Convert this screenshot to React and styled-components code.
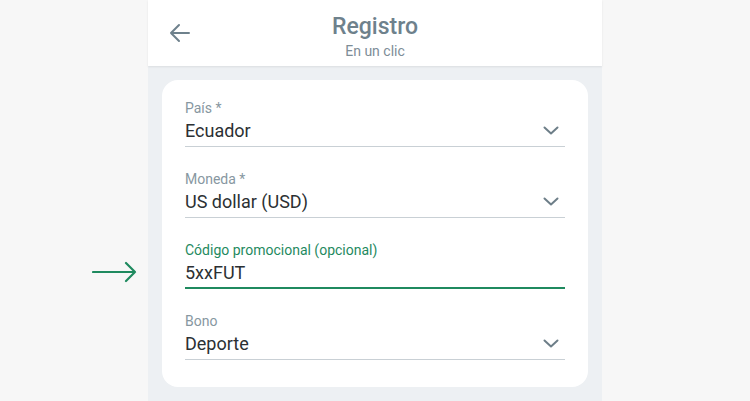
import React from 'react';
import styled, { createGlobalStyle } from 'styled-components';

const GlobalStyle = createGlobalStyle`
  html, body { margin: 0; padding: 0; background: #f7f7f7; }
  body { font-family: Roboto, "Liberation Sans", sans-serif; }
`;

const fields = [
  { label: 'País *', value: 'Ecuador', select: true },
  { label: 'Moneda *', value: 'US dollar (USD)', select: true },
  { label: 'Código promocional (opcional)', value: '5xxFUT', active: true },
  { label: 'Bono', value: 'Deporte', select: true },
];

function Chevron() {
  return (
    <svg width="16" height="10" viewBox="0 0 16 10" fill="none">
      <path d="M1.5 1.5 L8 7.5 L14.5 1.5" stroke="#6d7e88" strokeWidth="2" strokeLinecap="round" strokeLinejoin="round" />
    </svg>
  );
}

export default function App() {
  return (
    <Page>
      <GlobalStyle />
      <Column>
        <Header>
          <BackButton>
            <svg width="24" height="24" viewBox="0 0 24 24" fill="none">
              <path d="M21 12 H3 M11 4 L3 12 L11 20" stroke="#6e818c" strokeWidth="2" strokeLinecap="round" strokeLinejoin="round" />
            </svg>
          </BackButton>
          <Title>Registro</Title>
          <Subtitle>En un clic</Subtitle>
        </Header>
        <Body>
          <Card>
            {fields.map((f) => (
              <Field key={f.label} $active={f.active}>
                {f.active && (
                  <Pointer>
                    <svg width="46" height="22" viewBox="0 0 46 22" fill="none">
                      <path d="M1 11 H43 M34 2 L43 11 L34 20" stroke="#1f8a5f" strokeWidth="2.2" strokeLinecap="round" strokeLinejoin="round" />
                    </svg>
                  </Pointer>
                )}
                <Label $active={f.active}>{f.label}</Label>
                <ValueRow>
                  <Value>{f.value}</Value>
                  {f.select && <Chevron />}
                </ValueRow>
              </Field>
            ))}
          </Card>
        </Body>
      </Column>
    </Page>
  );
}

const Page = styled.div`
  display: flex;
  justify-content: center;
  height: 401px;
  overflow: hidden;
`;

const Column = styled.div`
  width: 454px;
  display: flex;
  flex-direction: column;
  background: #edf0f3;
`;

const Header = styled.div`
  position: relative;
  height: 66px;
  background: #fff;
  box-shadow: 0 1px 2px rgba(0, 0, 0, 0.08);
  display: flex;
  flex-direction: column;
  align-items: center;
  padding-top: 13px;
  box-sizing: border-box;
`;

const BackButton = styled.div`
  position: absolute;
  left: 20px;
  top: 21px;
  display: flex;
`;

const Title = styled.div`
  font-size: 23px;
  font-weight: 500;
  color: #6e818c;
  line-height: 28px;
`;

const Subtitle = styled.div`
  font-size: 14px;
  color: #7d8d97;
  line-height: 18px;
  margin-top: 1px;
`;

const Body = styled.div`
  flex: 1;
  padding: 14px 14px 0;
`;

const Card = styled.div`
  background: #fff;
  border-radius: 16px;
  padding: 20px 23px 27px;
  display: flex;
  flex-direction: column;
  gap: 24px;
`;

const Field = styled.div`
  position: relative;
  padding-bottom: ${(p) => (p.$active ? '2px' : '3px')};
  border-bottom: ${(p) => (p.$active ? '2px solid #1f8a5f' : '1px solid #c9d0d5')};
`;

const Pointer = styled.div`
  position: absolute;
  left: -93px;
  top: 19px;
  display: flex;
`;

const Label = styled.div`
  font-size: 14px;
  line-height: 16px;
  color: ${(p) => (p.$active ? '#1f8a5f' : '#8797a1')};
`;

const ValueRow = styled.div`
  display: flex;
  align-items: center;
  justify-content: space-between;
  margin-top: 3px;
  padding-right: 6px;
`;

const Value = styled.div`
  font-size: 18px;
  line-height: 24px;
  color: #2b3033;
`;
